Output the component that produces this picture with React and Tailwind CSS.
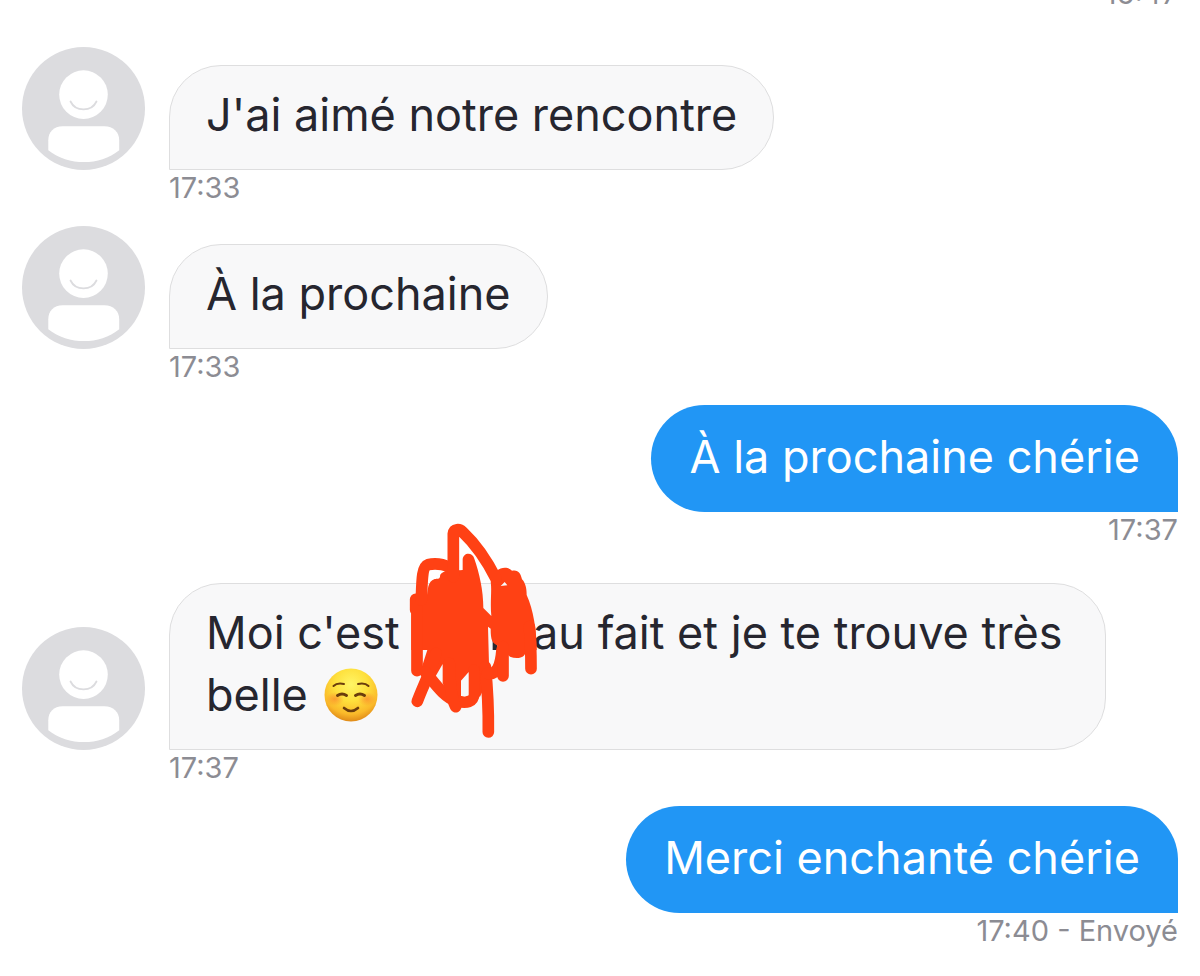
const messages = [
  { id: 1, mine: true, time: "16:47" },
  { id: 2, text: "J'ai aimé notre rencontre", time: "17:33" },
  { id: 3, text: "À la prochaine", time: "17:33" },
  { id: 4, mine: true, text: "À la prochaine chérie", time: "17:37" },
  {
    id: 5,
    text: (
      <>
        Moi c'est <HiddenName /> au fait et je te trouve très belle <Smiley />
      </>
    ),
    time: "17:37",
  },
  { id: 6, mine: true, text: "Merci enchanté chérie", time: "17:40 - Envoyé" },
];

function Avatar() {
  return (
    <svg viewBox="0 0 124 124" className="w-[123px] h-[123px] shrink-0" aria-hidden="true">
      <circle cx="62" cy="62" r="62" fill="#dcdcdf" />
      <circle cx="62" cy="48" r="24.5" fill="#fff" />
      <path d="M49 55 C54 65.500 70 65.500 75 55" fill="none" stroke="#dcdcdf" strokeWidth="2" strokeLinecap="round" />
      <path d="M26.500 104 V94 C26.500 86 32 80 41 80 H83 C92 80 98 86 98 94 V104 C78 120 47 120 26.500 104 Z" fill="#fff" />
    </svg>
  );
}

function Smiley() {
  return (
    <svg viewBox="0 0 54 54" className="inline-block w-[54px] h-[54px] ml-1 -mt-1 mb-1 align-middle" role="img" aria-label="sourire">
      <defs>
        <radialGradient id="face" cx="50%" cy="30%" r="70%">
          <stop offset="0" stopColor="#fff566" />
          <stop offset="0.45" stopColor="#fee03c" />
          <stop offset="0.8" stopColor="#fab92a" />
          <stop offset="1" stopColor="#e08a18" />
        </radialGradient>
        <radialGradient id="cheek">
          <stop offset="0" stopColor="#fb7b2c" stopOpacity="0.6" />
          <stop offset="1" stopColor="#fb7b2c" stopOpacity="0" />
        </radialGradient>
      </defs>
      <circle cx="27" cy="27" r="26.5" fill="url(#face)" />
      <ellipse cx="11" cy="31" rx="9" ry="7" fill="url(#cheek)" />
      <ellipse cx="43" cy="31" rx="9" ry="7" fill="url(#cheek)" />
      <g fill="none" stroke="#6b3d0c" strokeLinecap="round">
        <path d="M9.500 18 Q13 14.500 20 16" strokeWidth="2" />
        <path d="M34 16 Q41 14.500 44.500 18" strokeWidth="2" />
        <path d="M13.500 27.500 Q18 24.500 22.500 27.500" strokeWidth="3" />
        <path d="M31.500 27.500 Q36 24.500 40.500 27.500" strokeWidth="3" />
        <path d="M20 40 Q27 46 34 40" strokeWidth="2.600" />
      </g>
    </svg>
  );
}

// name scratched out with the marker tool
function HiddenName() {
  return (
    <span className="relative inline-block w-[108px] h-8">
      <svg viewBox="0 0 450 720" className="absolute -left-3 -top-[107px] w-[150px] h-[240px] max-w-none" aria-hidden="true">
        <path d="M278 380 H292 V420 H278 Z M78 412 H90 V420 H78 Z" fill="#26262f" />
        <path
          d="M34 262 L64 250 L80 262 C84 240 82 214 104 207 C112 205 118 208 120 200 C120 190 130 184 145 184 L188 180 V148 C190 126 218 126 223 146 C238 190 250 240 250 294 L274 318 C270 280 276 240 272 215 L290 182 C305 170 325 170 336 182 C355 178 362 190 366 208 C378 220 380 240 380 255 C400 300 410 360 410 420 L376 428 C374 444 350 448 330 440 L296 408 C276 400 272 390 272 356 L264 350 L268 500 L240 560 L206 550 V486 C200 512 190 512 183 512 V570 L150 570 L128 520 V462 L106 500 L60 488 L82 420 H34 Z"
          fill="#ff4114"
        />
        <g fill="none" stroke="#ff4114" strokeWidth="35" strokeLinecap="round" strokeLinejoin="round">
          <path d="M47 268 V300 M51 290 V482" />
          <path d="M64 270 C66 210 66 170 84 164 C108 158 148 162 162 188" />
          <path d="M160 200 V72 C162 56 178 56 188 66 C222 98 260 150 288 206" />
          <path d="M108 430 C90 490 68 530 52 574" />
          <path d="M76 486 C105 520 130 560 170 574 C200 580 220 578 222 550 V480" />
          <path d="M148 460 C150 520 152 560 167 590" />
          <path d="M256 470 C262 530 266 590 265 666" />
          <path d="M262 490 C290 496 302 470 306 420" />
          <path d="M309 410 V498" />
          <path d="M388 350 C392 390 393 430 393 476" />
        </g>
        <path d="M302 228 L314 216 L322 226 Z M183 512 L206 486 V556 Q194 562 183 556 Z" fill="#f8f8f9" />
      </svg>
    </span>
  );
}

function Message({ mine, text, time }) {
  if (mine) {
    return (
      <li className="flex flex-col items-end mb-[35px]">
        {text && <p className="bg-[#2196f5] text-white rounded-[54px] rounded-br-none px-[38px] pt-[21px] pb-6">{text}</p>}
        <time className="text-[29px] leading-9 text-[#8c8c93]">{time}</time>
      </li>
    );
  }
  return (
    <li className="mb-5">
      <div className="flex items-end gap-6">
        <Avatar />
        <p className="max-w-[937px] bg-[#f8f8f9] border border-[#dededf] text-[#26262f] rounded-[52px] rounded-bl-none px-9 pt-[18px] pb-[23px]">
          {text}
        </p>
      </div>
      <time className="block pl-[147px] text-[29px] leading-9 text-[#8c8c93]">{time}</time>
    </li>
  );
}

export default function App() {
  return (
    <main className="bg-white min-h-screen overflow-hidden font-['Inter',sans-serif] text-[45px] leading-[62px]">
      <ul className="-mt-6 px-[22px]">
        {messages.map((m) => (
          <Message key={m.id} {...m} />
        ))}
      </ul>
    </main>
  );
}
